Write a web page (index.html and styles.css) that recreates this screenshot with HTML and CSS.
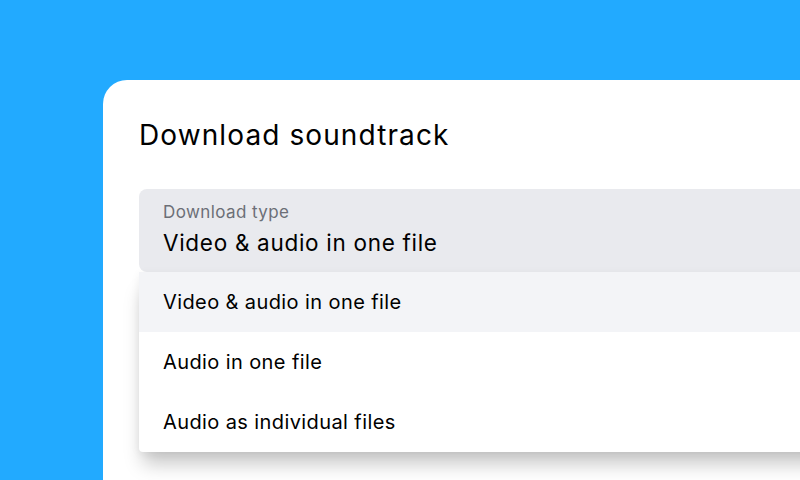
FILE: index.html
```html
<!DOCTYPE html>
<html lang="en">

<head>
    <meta charset="UTF-8">
    <meta name="viewport" content="width=device-width, initial-scale=1.0">
    <title>Download soundtrack</title>
    <link rel="stylesheet" href="styles.css">
</head>

<body>
    <div class="card">
        <h2 class="title">Download soundtrack</h2>

        <!-- Download type select -->
        <div class="field">
            <div class="select">
                <p class="label">Download type</p>
                <p class="value">Video &amp; audio in one file</p>
            </div>
            <ul class="menu">
                <li class="option active">Video &amp; audio in one file</li>
                <li class="option">Audio in one file</li>
                <li class="option">Audio as individual files</li>
            </ul>
        </div>
    </div>
</body>

</html>
```

FILE: styles.css
```css
body {
    margin: 0;
    background-color: #22aaff;
    font-family: Inter, "Noto Sans", sans-serif;
    color: #000;
    overflow: hidden;
    height: 480px;
}

.card {
    box-sizing: border-box;
    margin-left: 103px;
    margin-top: 80px;
    height: 400px;
    background-color: white;
    border-radius: 24px 0 0 0;
    padding: 38px 0 0 36px;
}

.title {
    margin: 0;
    font-size: 28px;
    line-height: 34px;
    font-weight: 400;
    letter-spacing: 1.1px;
}

.field {
    margin-top: 37px;
    width: 700px;
}

.select {
    background-color: #e9eaee;
    border-radius: 8px;
    padding: 12px 24px 15px 24px;
}

.label {
    margin: 0;
    font-size: 17px;
    line-height: 22px;
    color: #6c6f77;
    letter-spacing: 0.4px;
}

.value {
    margin: 0;
    margin-top: 6px;
    font-size: 22.5px;
    line-height: 28px;
    letter-spacing: 0.7px;
}

.menu {
    list-style: none;
    margin: 0;
    padding: 0;
    background-color: white;
    border-radius: 0 0 4px 4px;
    box-shadow: 0 16px 18px -4px rgba(0, 0, 0, 0.22), 0 2px 10px rgba(0, 0, 0, 0.06);
}

.option {
    height: 60px;
    line-height: 60px;
    padding-left: 24px;
    font-size: 20px;
    letter-spacing: 0.4px;
}

.active {
    background-color: #f3f4f7;
}
```
